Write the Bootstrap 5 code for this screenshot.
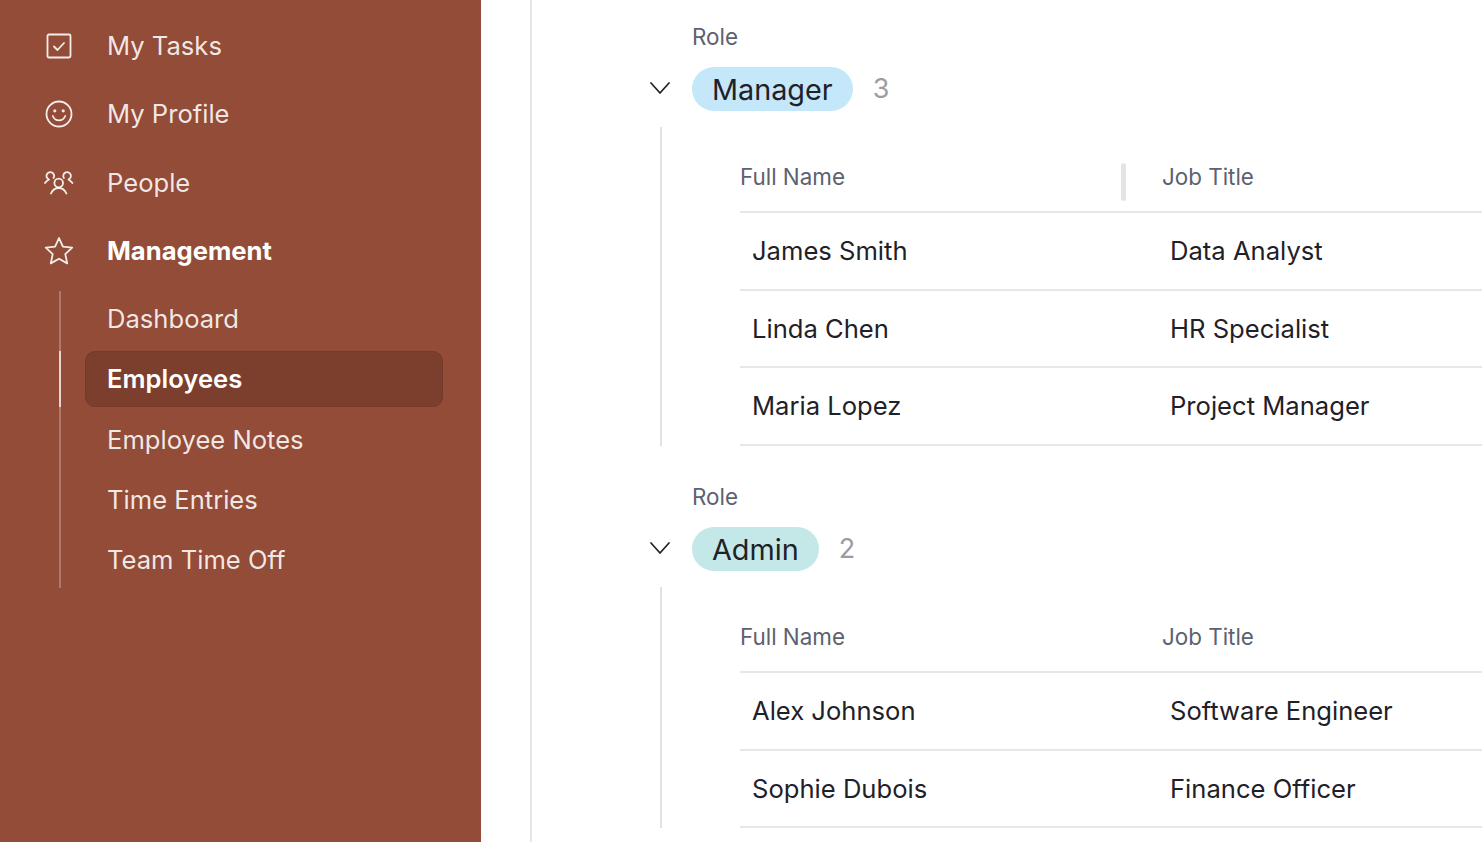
<!DOCTYPE html>
<html lang="en">
<head>
<meta charset="utf-8">
<title>Employees</title>
<link href="https://cdn.jsdelivr.net/npm/bootstrap@5.3.0/dist/css/bootstrap.min.css" rel="stylesheet">
<style>
html,body{height:842px;overflow:hidden;background:#fff}
body{font-family:Inter,"Liberation Sans",sans-serif;color:#1f2128}
.app-shell{height:842px;overflow:hidden}
.side-panel{width:481px;flex:none;background:#934c37;padding-top:11.5px;color:rgba(255,255,255,.88)}
.side-item{height:68.4px;padding-left:44px;font-size:25.6px;line-height:1}
.side-ico{width:30px;height:30px;flex:none;margin-right:33px;fill:none;stroke:rgba(255,255,255,.9);stroke-width:1.8;stroke-linecap:round;stroke-linejoin:round}
.side-strong{font-weight:700;color:#fff;font-size:25.6px}
.side-sub{margin-left:59px;margin-top:5.5px;border-left:2px solid rgba(255,255,255,.25);width:384px}
.sub-item{height:56px;margin-left:24px;padding-left:21px;font-size:25.6px;line-height:1;border-radius:10px;border:1px solid transparent}
.sub-item + .sub-item{margin-top:4.4px}
.sub-current{background:#7c3e2d;border-color:#75392a;color:#fff;font-weight:600;position:relative}
.sub-current::before{content:"";position:absolute;left:-27px;top:-1px;bottom:-1px;width:2px;background:rgba(255,255,255,.7)}
.main-pane{margin-left:49px;border-left:2px solid #e7e7e9;flex:1;min-width:0;padding-left:118px;padding-top:23px}
.group-block{height:460px}
.role-cap{font-size:22.4px;line-height:28px;color:#5d6170;margin-left:42px}
.role-head{height:44px;margin-top:16px}
.chev-box{width:42px;flex:none}
.chev-ico{width:22px;height:22px;margin-left:-1px;fill:none;stroke:#1f2128;stroke-width:1.7;stroke-linecap:round;stroke-linejoin:round;display:block}
.role-pill{height:44px;padding:1px 20px 0;border-radius:22px;font-size:28.8px;line-height:43px}
.pill-blue{background:#c4e7f9}
.pill-teal{background:#c3e8e7}
.role-num{font-size:27px;color:#9a9ca5;margin-left:20px;padding-top:1px}
.rail{margin-top:16px;margin-left:10px;border-left:2px solid #e2e2e4;padding-left:78px}
.emp-table{width:1000px;table-layout:fixed;border-collapse:collapse;margin:0;--bs-table-bg:transparent}
.emp-table th{height:85px;padding:15px 0 0 4px;font-size:22.4px;font-weight:400;color:#5d6170;border-bottom:2px solid #e7e7e9;vertical-align:middle;position:relative}
.emp-table th:first-child{padding-left:0}
.emp-table td{height:77.5px;padding:1px 12px 0;font-size:25.6px;color:#1f2128;border-bottom:2px solid #e7e7e9;vertical-align:middle}
.col-grip{position:absolute;right:32px;top:36px;width:5px;height:38px;border-radius:3px;background:#e4e4e6}
</style>
</head>
<body>
<div class="app-shell d-flex">
  <nav class="side-panel">
    <div class="side-item d-flex align-items-center">
      <svg class="side-ico" viewBox="0 0 30 30"><rect x="3.500" y="3.500" width="23" height="23" rx="1.500"/><path d="M10 15.500l3.500 3.500 6.500-7"/></svg><span>My Tasks</span>
    </div>
    <div class="side-item d-flex align-items-center">
      <svg class="side-ico" viewBox="0 0 30 30"><circle cx="15" cy="15" r="12.500"/><path d="M8.800 17c1.200 3 3.400 4.400 6.200 4.400s5-1.400 6.200-4.400"/><circle cx="10.800" cy="11.800" r=".7"/><circle cx="19.200" cy="11.800" r=".7"/></svg><span>My Profile</span>
    </div>
    <div class="side-item d-flex align-items-center">
      <svg class="side-ico" viewBox="0 0 30 30"><circle cx="14.700" cy="16" r="4.300"/><path d="M7 26.500c1.500-3.500 4.500-5.500 7.700-5.500s6.200 2 7.700 5.500"/><path d="M9.500 11a3.800 3.800 0 1 0-4.500 1.500c-1.500.8-3 2-4 3.500"/><path d="M19.900 11a3.800 3.800 0 1 1 4.500 1.500c1.500.8 3 2 4 3.500"/></svg><span>People</span>
    </div>
    <div class="side-item d-flex align-items-center">
      <svg class="side-ico" viewBox="0 0 30 30"><path d="M15 2l3.900 8.700 9.300 1-6.900 6.400 1.900 9.300-8.200-4.700-8.200 4.700 1.900-9.300L1.800 11.700l9.300-1z"/></svg><span class="side-strong">Management</span>
    </div>
    <div class="side-sub">
      <div class="sub-item d-flex align-items-center">Dashboard</div>
      <div class="sub-item sub-current d-flex align-items-center">Employees</div>
      <div class="sub-item d-flex align-items-center">Employee Notes</div>
      <div class="sub-item d-flex align-items-center">Time Entries</div>
      <div class="sub-item d-flex align-items-center">Team Time Off</div>
    </div>
  </nav>
  <main class="main-pane">
    <section class="group-block">
      <div class="role-cap">Role</div>
      <div class="role-head d-flex align-items-center">
        <div class="chev-box"><svg class="chev-ico" viewBox="0 0 22 22"><path d="M2 5l9 10 9-10"/></svg></div>
        <span class="role-pill pill-blue">Manager</span><span class="role-num">3</span>
      </div>
      <div class="rail">
        <table class="table emp-table">
          <colgroup><col style="width:418px"><col></colgroup>
          <thead><tr><th>Full Name<span class="col-grip"></span></th><th>Job Title</th></tr></thead>
          <tbody>
            <tr><td>James Smith</td><td>Data Analyst</td></tr>
            <tr><td>Linda Chen</td><td>HR Specialist</td></tr>
            <tr><td>Maria Lopez</td><td>Project Manager</td></tr>
          </tbody>
        </table>
      </div>
    </section>
    <section class="group-block">
      <div class="role-cap">Role</div>
      <div class="role-head d-flex align-items-center">
        <div class="chev-box"><svg class="chev-ico" viewBox="0 0 22 22"><path d="M2 5l9 10 9-10"/></svg></div>
        <span class="role-pill pill-teal">Admin</span><span class="role-num">2</span>
      </div>
      <div class="rail">
        <table class="table emp-table">
          <colgroup><col style="width:418px"><col></colgroup>
          <thead><tr><th>Full Name</th><th>Job Title</th></tr></thead>
          <tbody>
            <tr><td>Alex Johnson</td><td>Software Engineer</td></tr>
            <tr><td>Sophie Dubois</td><td>Finance Officer</td></tr>
          </tbody>
        </table>
      </div>
    </section>
  </main>
</div>
<script src="https://cdn.jsdelivr.net/npm/bootstrap@5.3.0/dist/js/bootstrap.bundle.min.js"></script>
</body>
</html>
